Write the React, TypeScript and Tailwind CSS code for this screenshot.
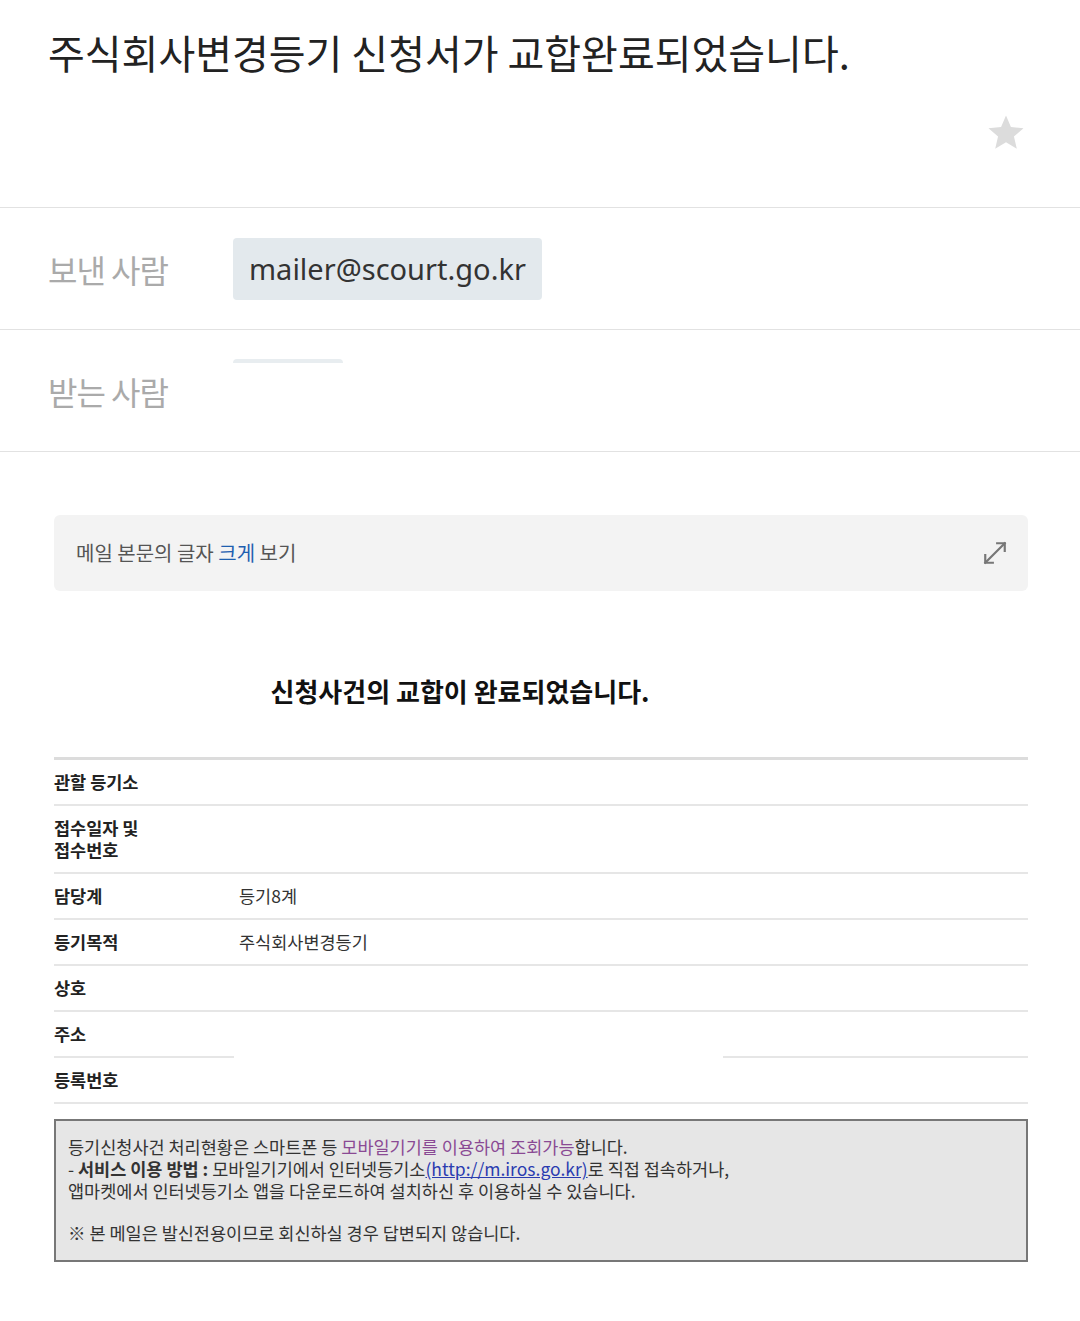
const KR = "font-['Noto_Sans_CJK_KR','Noto_Sans',sans-serif]";

function StarIcon() {
  return (
    <svg viewBox="0 0 24 24" className="w-[42px] h-[42px]" fill="#dcdcdc">
      <path d="M12 17.27L18.18 21l-1.64-7.03L22 9.24l-7.19-.61L12 2 9.19 8.63 2 9.24l5.46 4.73L5.82 21z" />
    </svg>
  );
}

function ExpandIcon() {
  return (
    <svg viewBox="0 0 24 24" className="w-[26px] h-[26px]" fill="none" stroke="#777" strokeWidth="2" strokeLinecap="square">
      <path d="M14 3h7v7" />
      <path d="M21 3L3 21" />
      <path d="M3 14v7h7" />
    </svg>
  );
}

const rows: { label: string[]; value?: string }[] = [
  { label: ["관할 등기소"] },
  { label: ["접수일자 및", "접수번호"] },
  { label: ["담당계"], value: "등기8계" },
  { label: ["등기목적"], value: "주식회사변경등기" },
  { label: ["상호"] },
];

export default function App() {
  return (
    <div className={`w-[1080px] min-h-[1321px] bg-white ${KR}`}>
      {/* Subject */}
      <div className="h-[208px] border-b border-[#e2e2e2] px-[48px] pt-[24px] flex flex-col">
        <h1 className="text-[40px] leading-[56px] tracking-[0px] text-[#222] font-normal">
          주식회사변경등기 신청서가 교합완료되었습니다.
        </h1>
        <div className="flex justify-end mt-[32px] pr-[5px]">
          <StarIcon />
        </div>
      </div>

      {/* Sender */}
      <div className="h-[122px] border-b border-[#e2e2e2] flex items-center px-[48px]">
        <div className="w-[185px] text-[32px] tracking-[-1px] text-[#aaa]">보낸 사람</div>
        <div className="h-[62px] px-[16px] rounded-[4px] bg-[#e3e9ed] flex items-center text-[29px] text-[#333] font-['Noto_Sans',sans-serif]">
          mailer@scourt.go.kr
        </div>
      </div>

      {/* Recipient */}
      <div className="h-[122px] border-b border-[#e2e2e2] flex px-[48px]">
        <div className="w-[185px] text-[32px] tracking-[-1px] text-[#aaa] pt-[37px]">받는 사람</div>
        <div className="mt-[29px] w-[110px] h-[4px] rounded-t-[4px] bg-[#e8edf0]" />
      </div>

      {/* Body */}
      <div className="pl-[54px] pr-[52px] pt-[63px]">
        <div className="h-[76px] rounded-[6px] bg-[#f3f3f3] flex items-center justify-between pl-[22px] pr-[20px]">
          <span className="text-[20px] text-[#555]">
            메일 본문의 글자 <span className="text-[#1f5fb0]">크게</span> 보기
          </span>
          <ExpandIcon />
        </div>

        <div className="w-[812px] text-center mt-[82px] text-[26px] leading-[36px] font-bold text-[#111]">
          신청사건의 교합이 완료되었습니다.
        </div>

        <div className="mt-[48px] border-t-[3px] border-[#dcdcdc] text-[17.5px] leading-[22px] text-[#222]">
          {rows.map((r, i) => (
            <div key={i} className="flex border-b-2 border-[#e6e6e6]">
              <div className="w-[180px] py-[11px] font-bold">
                {r.label.map((l, j) => (
                  <div key={j}>{l}</div>
                ))}
              </div>
              <div className="flex-1 py-[11px] pl-[5px] text-[#333]">{r.value}</div>
            </div>
          ))}
          <div className="flex">
            <div className="w-[180px] py-[11px] font-bold border-b-2 border-[#e6e6e6]">주소</div>
            <div className="w-[489px]" />
            <div className="flex-1 border-b-2 border-[#e6e6e6]" />
          </div>
          <div className="flex border-b-2 border-[#e6e6e6]">
            <div className="w-[180px] py-[11px] font-bold">등록번호</div>
            <div className="flex-1" />
          </div>
        </div>

        <div className="mt-[15px] border-2 border-[#777] bg-[#e6e6e6] pl-[12px] pt-[15px] pb-[16px] text-[17.5px] leading-[22px] text-[#333]">
          <div>
            등기신청사건 처리현황은 스마트폰 등{" "}
            <span className="text-[#8a4a94]">모바일기기를 이용하여 조회가능</span>합니다.
          </div>
          <div>
            - <b>서비스 이용 방법 :</b> 모바일기기에서 인터넷등기소
            <span className="text-[#2a3cb0] underline">(http://m.iros.go.kr)</span>로 직접 접속하거나,
          </div>
          <div>앱마켓에서 인터넷등기소 앱을 다운로드하여 설치하신 후 이용하실 수 있습니다.</div>
          <div className="h-[20px]" />
          <div>※ 본 메일은 발신전용이므로 회신하실 경우 답변되지 않습니다.</div>
        </div>
      </div>
    </div>
  );
}
